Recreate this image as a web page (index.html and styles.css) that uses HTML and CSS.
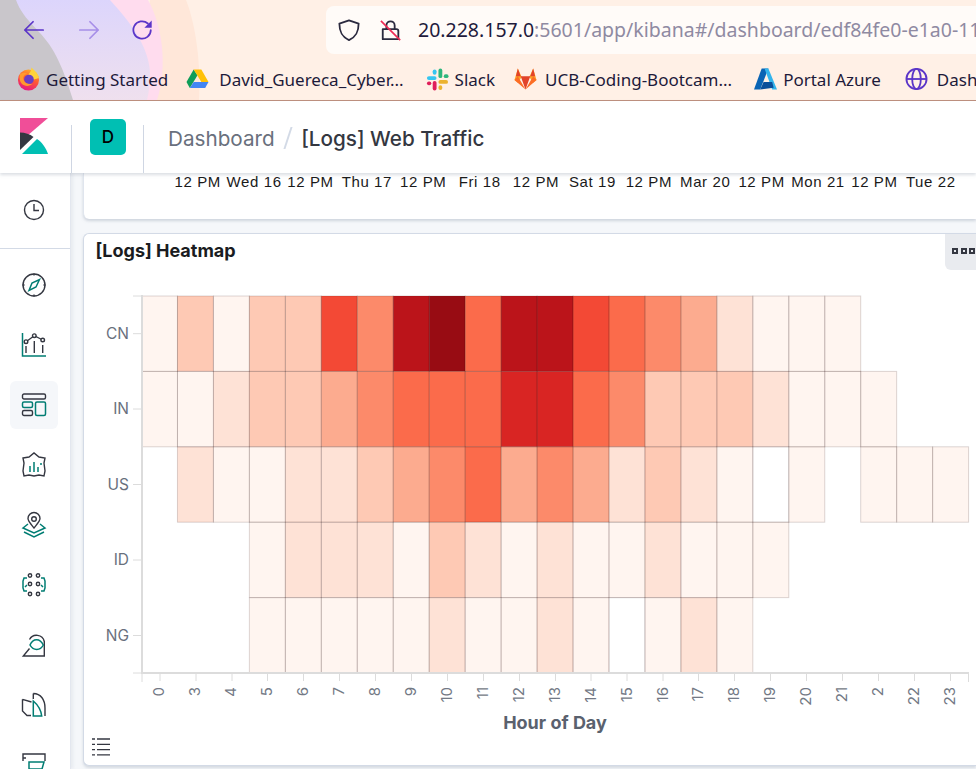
FILE: index.html
```html
<!DOCTYPE html>
<html lang="en">
<head>
<meta charset="utf-8">
<title>[Logs] Web Traffic</title>
<link rel="stylesheet" href="styles.css">
</head>
<body>
<div class="page">
  <header class="browser">
    <svg class="theme" viewBox="0 0 976 100" preserveAspectRatio="none" aria-hidden="true">
      <defs>
        <linearGradient id="lav" x1="0" y1="0" x2="0" y2="1"><stop offset="0" stop-color="#dcd5fc"/><stop offset="1" stop-color="#efe0ee"/></linearGradient>
      </defs>
      <rect class="th-base" width="976" height="100"/>
      <path class="th-peach" d="M150 0H186C196 25 201 65 199 100H140Z"/>
      <path class="th-pink" d="M100 0H148C162 25 168 65 157 100H100Z"/>
      <path fill="url(#lav)" d="M0 0H110C130 22 148 45 150 72C150 82 149 92 147 100H0Z"/>
      <path class="th-gray" d="M0 0H16C24 22 42 30 54 52C62 66 68 84 73 100H0Z"/>
    </svg>
    <div class="toolbar">
      <svg class="nav-ico back" viewBox="0 0 24 24"><path d="M22 12H2M11 3l-9 9 9 9"/></svg>
      <svg class="nav-ico fwd" viewBox="0 0 24 24"><path d="M2 12h20M13 3l9 9-9 9"/></svg>
      <svg class="nav-ico reload" viewBox="0 0 24 24"><path d="M20.5 12a9.5 9.5 0 1 1-3.2-7.1"/><path class="solid" d="M21.5 1.5v8h-8z"/></svg>
      <div class="urlbar">
        <svg class="url-ico shield" viewBox="0 0 24 24"><path d="M12 1.5 22.5 5c0 9-2.500 14.500-10.500 18C4 19.500 1.500 14 1.500 5z"/></svg>
        <svg class="url-ico lock" viewBox="0 0 24 24"><path d="M3 11h15a2 2 0 0 1 2 2v9H3z"/><path d="M7 11V7a4.500 4.500 0 0 1 9 0v4"/><path class="slash" d="M1 2l21 21"/></svg>
        <span class="url"><span class="url-host">20.228.157.0</span>:5601/app/kibana#/dashboard/edf84fe0-e1a0-11</span>
      </div>
    </div>
    <nav class="bookmarks">
      <a class="bm bm-ff">
        <svg class="bm-ico" viewBox="0 0 24 24">
          <defs>
            <linearGradient id="ffg" x1="0.7" y1="0" x2="0.3" y2="1"><stop offset="0" stop-color="#ffb427"/><stop offset=".45" stop-color="#ff5a32"/><stop offset="1" stop-color="#e31587"/></linearGradient>
          </defs>
          <circle cx="12" cy="13" r="11" fill="url(#ffg)"/>
          <path fill="#ffd23a" d="M15 0c3 3 7 6 8 11l-7 2-4-6c2-2 3-4 3-7z"/>
          <circle cx="12.500" cy="12.500" r="5" fill="#6a3fc4"/>
          <path fill="#ff9a2e" d="M3 7c3-2 6-2 8 0-3 0-5 2-4 6 1 3 5 5 9 4-3 3-8 3-11 0-2-2-3-6-2-10z"/>
        </svg>
        <span>Getting Started</span>
      </a>
      <a class="bm bm-drive">
        <svg class="bm-ico" viewBox="0 0 24 24">
          <path fill="#0f9d58" d="M8 2 .5 15l3.500 6.500L12 8z"/>
          <path fill="#ffc107" d="M8 2h8l7.500 13H16z"/>
          <path fill="#4285f4" d="M23.500 15 20 21.500H4L8 15z"/>
        </svg>
        <span>David_Guereca_Cyber...</span>
      </a>
      <a class="bm bm-slack">
        <svg class="bm-ico" viewBox="0 0 24 24">
          <rect class="sl-b" x="1" y="9" width="10" height="4" rx="2"/><rect class="sl-b" x="7" y="2" width="4" height="5.500" rx="2"/>
          <rect class="sl-g" x="13" y="1" width="4" height="10" rx="2"/><rect class="sl-g" x="18.500" y="7" width="5" height="4" rx="2"/>
          <rect class="sl-y" x="13" y="13" width="10" height="4" rx="2"/><rect class="sl-y" x="13" y="18.500" width="4" height="5" rx="2"/>
          <rect class="sl-r" x="7" y="14" width="4" height="10" rx="2"/><rect class="sl-r" x="1" y="14.500" width="4.500" height="4" rx="2"/>
        </svg>
        <span>Slack</span>
      </a>
      <a class="bm bm-git">
        <svg class="bm-ico" viewBox="0 0 24 24">
          <path fill="#fca326" d="M4 1 .5 13 4 16l4-6z"/>
          <path fill="#fca326" d="M20 1l3.500 12L20 16l-4-6z"/>
          <path fill="#fc6d26" d="M.5 13 12 23 4 9zM23.500 13 12 23l8-14z"/>
          <path fill="#e24329" d="M7 9h10l-5 14zM4 1l3 8H2zM20 1l-3 8h5z"/>
        </svg>
        <span>UCB-Coding-Bootcam...</span>
      </a>
      <a class="bm bm-az">
        <svg class="bm-ico" viewBox="0 0 24 24">
          <path fill="#0a64b4" d="M8 1h7L6.500 23H0z"/>
          <path fill="#33b4ec" d="M15 1h-4l8 22h5z"/>
          <path fill="#0b4f9a" d="M10 15h9l1.500 6-14 2z"/>
        </svg>
        <span>Portal Azure</span>
      </a>
      <a class="bm bm-globe">
        <svg class="bm-ico globe" viewBox="0 0 24 24"><circle cx="12" cy="12" r="10.500"/><ellipse cx="12" cy="12" rx="4.500" ry="10.500"/><path d="M1.500 12h21"/></svg>
        <span>Dash</span>
      </a>
    </nav>
  </header>

  <div class="kbn-header">
    <div class="logo-cell">
      <svg class="kbn-logo" viewBox="0 0 28 36">
        <path class="lg-pink" d="M0 0h28L0 24z"/>
        <path class="lg-dark" d="M0 14.500c5 0 10 1.500 13.500 4.500L0 32z"/>
        <path class="lg-teal" d="M2 36 17 21c5 3 9 9 11 15z"/>
      </svg>
    </div>
    <div class="space-cell"><span class="space">D</span></div>
    <div class="crumbs"><span class="crumb">Dashboard</span><span class="crumb-sep"></span><span class="crumb-cur">[Logs] Web Traffic</span></div>
  </div>

  <div class="main">
    <aside class="sidebar">
      <div class="side-top">
        <span class="side-item">
          <svg class="app-ico" viewBox="0 0 24 24"><circle class="d" cx="12" cy="12" r="9.500"/><path class="d" d="M12 6v6.500h5"/></svg>
        </span>
      </div>
      <div class="side-apps">
        <span class="side-item">
          <svg class="app-ico" viewBox="0 0 24 24"><circle class="d" cx="12" cy="12" r="11"/><path class="d" d="M12 .5v2M12 21.500v2M.5 12h2M21.500 12h2"/><path class="t tf" d="M17.500 6.500 14 14l-7 3.500L10 10z"/></svg>
        </span>
        <span class="side-item">
          <svg class="app-ico" viewBox="0 0 24 24"><path class="t" d="M.5 0v23h23.500"/><path class="d" d="M4 8.700 12.300 2.700 20.700 7M4 13v7M12.300 8v12M20.700 12v8"/><circle class="d w" cx="4" cy="8.700" r="1.800"/><circle class="d w" cx="12.300" cy="2.700" r="1.800"/><circle class="d w" cx="20.700" cy="7" r="1.800"/></svg>
        </span>
        <span class="side-item active">
          <svg class="app-ico" viewBox="0 0 24 24"><rect class="d" x=".5" y="1" width="23" height="5" rx="1.500"/><rect class="t" x=".5" y="9" width="10" height="5.500" rx="1.500"/><rect class="d" x=".5" y="17.500" width="10" height="5" rx="1.500"/><rect class="t" x="13.500" y="9" width="10" height="13.500" rx="1.500"/></svg>
        </span>
        <span class="side-item">
          <svg class="app-ico" viewBox="0 0 24 24"><path class="d" d="M1 5 7 4l5-4 5 4 6 1-1 5 1 8-1 5-5-1-5 1-5-1-5 1-1-5 1-8z"/><path class="t" d="M8 13v6M12 9v10M16 14v5M19 10v2"/></svg>
        </span>
        <span class="side-item">
          <svg class="app-ico" viewBox="0 0 24 24"><path class="d" d="M12 15C8 10 6 8 6 5.500a6 6 0 0 1 12 0C18 8 16 10 12 15z"/><circle class="d" cx="12" cy="6" r="2.300"/><path class="t" d="M6 11 1 15l11 5 11-5-5-4M2 19l10 5 10-5"/></svg>
        </span>
        <span class="side-item">
          <svg class="app-ico" viewBox="0 0 24 24"><circle class="d" cx="8" cy="2.500" r="1.700"/><circle class="d" cx="16" cy="2.500" r="1.700"/><circle class="d" cx="8" cy="11" r="1.700"/><circle class="d" cx="16" cy="11" r="1.700"/><circle class="d" cx="8" cy="21" r="1.700"/><circle class="d" cx="16" cy="21" r="1.700"/><path class="t" d="M5 5H2L1 8v7l1 3h3M5 12l-2 2M19 5h3l1 3v7l-1 3h-3M19 12l2 2"/></svg>
        </span>
        <span class="side-item">
          <svg class="app-ico" viewBox="0 0 24 24"><path class="d" d="M7.500 6.500A8 8 0 0 1 22.300 8.500V23H1.300L7.500 15.500"/><path class="t" d="M8 12c3-7 10-7 13.300 0c-3 6-10 6-13.300 0z"/></svg>
        </span>
        <span class="side-item">
          <svg class="app-ico" viewBox="0 0 24 24"><path class="d" d="M11.300 .5C19 .5 23 7 23 15V23M11.300 .5V6M.5 6.300 9.500 9M.5 6.300V18L5 22.500H9"/><path class="t" d="M11.300 8C16 12 19 17 19.700 23H11.300Z"/></svg>
        </span>
        <span class="side-item">
          <svg class="app-ico" viewBox="0 0 24 24"><path class="d" d="M1 8V1h22v7M1 5h3"/><path class="t" d="M7 9h15l-2 7H7zM7 16v6"/></svg>
        </span>
      </div>
    </aside>

    <main class="content">
      <section class="panel panel-top">
        <div class="time-axis">
          <span>12 PM</span><span>Wed 16</span><span>12 PM</span><span>Thu 17</span><span>12 PM</span><span>Fri 18</span><span>12 PM</span><span>Sat 19</span><span>12 PM</span><span>Mar 20</span><span>12 PM</span><span>Mon 21</span><span>12 PM</span><span>Tue 22</span>
        </div>
      </section>

      <section class="panel panel-heat">
        <div class="panel-head">
          <h2 class="panel-title">[Logs] Heatmap</h2>
          <button class="panel-menu" aria-label="Options"><i></i><i></i><i></i></button>
        </div>
        <svg class="chart" viewBox="84 269 892 496" role="img" aria-label="Heatmap">
          <g id="cells" class="cells">
            <rect class="cell l1" x="141.5" y="296"/><rect class="cell l3" x="177.46" y="296"/><rect class="cell l1" x="213.42" y="296"/><rect class="cell l3" x="249.38" y="296"/><rect class="cell l3" x="285.34" y="296"/><rect class="cell l7" x="321.3" y="296"/><rect class="cell l5" x="357.26" y="296"/><rect class="cell l9" x="393.22" y="296"/><rect class="cell l10" x="429.18" y="296"/><rect class="cell l6" x="465.14" y="296"/><rect class="cell l9" x="501.1" y="296"/><rect class="cell l9" x="537.06" y="296"/><rect class="cell l7" x="573.02" y="296"/><rect class="cell l6" x="608.98" y="296"/><rect class="cell l5" x="644.94" y="296"/><rect class="cell l4" x="680.9" y="296"/><rect class="cell l2" x="716.86" y="296"/><rect class="cell l1" x="752.82" y="296"/><rect class="cell l1" x="788.78" y="296"/><rect class="cell l1" x="824.74" y="296"/>
            <rect class="cell l1" x="141.5" y="371.4"/><rect class="cell l1" x="177.46" y="371.4"/><rect class="cell l2" x="213.42" y="371.4"/><rect class="cell l3" x="249.38" y="371.4"/><rect class="cell l3" x="285.34" y="371.4"/><rect class="cell l4" x="321.3" y="371.4"/><rect class="cell l5" x="357.26" y="371.4"/><rect class="cell l6" x="393.22" y="371.4"/><rect class="cell l6" x="429.18" y="371.4"/><rect class="cell l6" x="465.14" y="371.4"/><rect class="cell l8" x="501.1" y="371.4"/><rect class="cell l8" x="537.06" y="371.4"/><rect class="cell l6" x="573.02" y="371.4"/><rect class="cell l5" x="608.98" y="371.4"/><rect class="cell l3" x="644.94" y="371.4"/><rect class="cell l3" x="680.9" y="371.4"/><rect class="cell l3" x="716.86" y="371.4"/><rect class="cell l2" x="752.82" y="371.4"/><rect class="cell l1" x="788.78" y="371.4"/><rect class="cell l1" x="824.74" y="371.4"/><rect class="cell l1" x="860.7" y="371.4"/>
            <rect class="cell l2" x="177.46" y="446.8"/><rect class="cell l1" x="213.42" y="446.8"/><rect class="cell l1" x="249.38" y="446.8"/><rect class="cell l2" x="285.34" y="446.8"/><rect class="cell l2" x="321.3" y="446.8"/><rect class="cell l3" x="357.26" y="446.8"/><rect class="cell l4" x="393.22" y="446.8"/><rect class="cell l5" x="429.18" y="446.8"/><rect class="cell l6" x="465.14" y="446.8"/><rect class="cell l4" x="501.1" y="446.8"/><rect class="cell l5" x="537.06" y="446.8"/><rect class="cell l4" x="573.02" y="446.8"/><rect class="cell l2" x="608.98" y="446.8"/><rect class="cell l3" x="644.94" y="446.8"/><rect class="cell l2" x="680.9" y="446.8"/><rect class="cell l1" x="716.86" y="446.8"/><rect class="cell l0" x="752.82" y="446.8"/><rect class="cell l1" x="788.78" y="446.8"/><rect class="cell l1" x="860.7" y="446.8"/><rect class="cell l1" x="896.66" y="446.8"/><rect class="cell l1" x="932.62" y="446.8"/>
            <rect class="cell l1" x="249.38" y="522.2"/><rect class="cell l2" x="285.34" y="522.2"/><rect class="cell l2" x="321.3" y="522.2"/><rect class="cell l2" x="357.26" y="522.2"/><rect class="cell l1" x="393.22" y="522.2"/><rect class="cell l3" x="429.18" y="522.2"/><rect class="cell l2" x="465.14" y="522.2"/><rect class="cell l1" x="501.1" y="522.2"/><rect class="cell l2" x="537.06" y="522.2"/><rect class="cell l1" x="573.02" y="522.2"/><rect class="cell l1" x="608.98" y="522.2"/><rect class="cell l2" x="644.94" y="522.2"/><rect class="cell l1" x="680.9" y="522.2"/><rect class="cell l1" x="716.86" y="522.2"/><rect class="cell l1" x="752.82" y="522.2"/>
            <rect class="cell l1" x="249.38" y="597.6"/><rect class="cell l1" x="285.34" y="597.6"/><rect class="cell l1" x="321.3" y="597.6"/><rect class="cell l1" x="357.26" y="597.6"/><rect class="cell l1" x="393.22" y="597.6"/><rect class="cell l2" x="429.18" y="597.6"/><rect class="cell l1" x="465.14" y="597.6"/><rect class="cell l1" x="501.1" y="597.6"/><rect class="cell l2" x="537.06" y="597.6"/><rect class="cell l1" x="573.02" y="597.6"/><rect class="cell l0" x="608.98" y="597.6"/><rect class="cell l1" x="644.94" y="597.6"/><rect class="cell l2" x="680.9" y="597.6"/><rect class="cell l1" x="716.86" y="597.6"/>
          </g>
          <use href="#cells" class="strokes"/>
          <path class="axis" d="M142 295v379M142 673H969"/>
          <path class="tick" d="M133 296h9M133 333.700h9M133 409h9M133 484.500h9M133 560h9M133 635.500h9M133 673h9M142 673v9M968.500 673v9"/>
          <path class="tick" d="M160 674v7M196 674v7M232 674v7M267.500 674v7M303.500 674v7M339.500 674v7M375.500 674v7M411.500 674v7M447.500 674v7M483.500 674v7M519.500 674v7M555.500 674v7M591 674v7M627 674v7M663 674v7M698.500 674v7M734.500 674v7M770.500 674v7M806.500 674v7M842.500 674v7M878.500 674v7M914.500 674v7M950.500 674v7"/>
          <g class="ylab">
            <text x="129" y="338.700">CN</text><text x="129" y="414">IN</text><text x="129" y="489.500">US</text><text x="129" y="565">ID</text><text x="129" y="640.500">NG</text>
          </g>
          <g class="xlab">
            <text transform="translate(164,687) rotate(-90)">0</text><text transform="translate(200,687) rotate(-90)">3</text><text transform="translate(236,687) rotate(-90)">4</text><text transform="translate(272,687) rotate(-90)">5</text><text transform="translate(308,687) rotate(-90)">6</text><text transform="translate(344,687) rotate(-90)">7</text><text transform="translate(380,687) rotate(-90)">8</text><text transform="translate(416,687) rotate(-90)">9</text><text transform="translate(452,687) rotate(-90)">10</text><text transform="translate(488,687) rotate(-90)">11</text><text transform="translate(524,687) rotate(-90)">12</text><text transform="translate(560,687) rotate(-90)">13</text><text transform="translate(596,687) rotate(-90)">14</text><text transform="translate(632,687) rotate(-90)">15</text><text transform="translate(668,687) rotate(-90)">16</text><text transform="translate(703,687) rotate(-90)">17</text><text transform="translate(739,687) rotate(-90)">18</text><text transform="translate(775,687) rotate(-90)">19</text><text transform="translate(811,687) rotate(-90)">20</text><text transform="translate(847,687) rotate(-90)">21</text><text transform="translate(883,687) rotate(-90)">2</text><text transform="translate(919,687) rotate(-90)">22</text><text transform="translate(955,687) rotate(-90)">23</text>
          </g>
          <text class="xtitle" x="555" y="729">Hour of Day</text>
        </svg>
        <button class="legend-toggle" aria-label="Legend">
          <svg viewBox="0 0 18 18"><path d="M0 1h3M5 1h13M0 6.300h3M5 6.300h13M0 11.600h3M5 11.600h13M0 16.900h3M5 16.900h13"/></svg>
        </button>
      </section>
    </main>
  </div>
</div>
</body>
</html>
```
FILE: styles.css
```css
* { box-sizing: border-box; }
html, body { margin: 0; padding: 0; }
body { background: #f5f7fa; font-family: "Inter", "Liberation Sans", sans-serif; }
.page { width: 976px; height: 769px; overflow: hidden; display: flex; flex-direction: column; }

/* Browser chrome */
.browser { position: relative; height: 101px; flex: none; border-bottom: 1px solid #bd8f7d; overflow: hidden; }
.theme { position: absolute; left: 0; top: 0; width: 976px; height: 100px; }
.th-base { fill: #fff0e6; }
.th-peach { fill: #ffe7d9; }
.th-pink { fill: #ffdcee; }
.th-gray { fill: #c9c6cb; }
.toolbar { position: relative; display: flex; align-items: center; height: 56px; padding: 4px 0 0 23px; }
.nav-ico { width: 22px; height: 22px; fill: none; stroke-width: 1.900; stroke-linecap: round; stroke-linejoin: round; flex: none; }
.back { stroke: #5b35c8; }
.fwd { stroke: #a78fe8; margin-left: 33px; }
.reload { stroke: #5b35c8; margin-left: 32px; }
.reload .solid { fill: #5b35c8; stroke: none; }
.urlbar { display: flex; align-items: center; height: 48px; width: 651px; margin-left: 172px; background: #fffbf8; border-radius: 8px 0 0 8px; padding-left: 12px; overflow: hidden; flex: none; }
.url-ico { width: 22px; height: 24px; fill: none; stroke: #2b2a3f; stroke-width: 2; flex: none; stroke-linejoin: round; }
.lock { margin-left: 20px; }
.lock .slash { stroke: #ef2a55; stroke-width: 1.800; }
.url { margin-left: 16px; font: 19.500px/1 "Noto Sans", "Open Sans", sans-serif; color: #8f8aa2; white-space: nowrap; }
.url-host { color: #1f1b3d; }
.bookmarks { position: relative; display: flex; align-items: center; height: 46px; padding-left: 17px; white-space: nowrap; }
.bm { display: flex; align-items: center; gap: 6px; font: 17px/1 "Noto Sans", "Open Sans", sans-serif; color: #1d1a3a; flex: none; }
.bm-ico { width: 23px; height: 24px; flex: none; }
.bm-drive { margin-left: 18px; gap: 10px; }
.bm-slack { margin-left: 22px; gap: 6px; }
.bm-git { margin-left: 19px; gap: 8px; }
.bm-az { margin-left: 22px; gap: 6px; }
.bm-globe { margin-left: 24px; gap: 9px; }
.globe { fill: none; stroke: #5b35c8; stroke-width: 1.900; }
.sl-b { fill: #36c5f0; } .sl-g { fill: #2eb67d; } .sl-y { fill: #ecb22e; } .sl-r { fill: #e01e5a; }

/* Kibana header */
.kbn-header { position: relative; z-index: 3; height: 72px; flex: none; display: flex; background: #fff; box-shadow: 0 2px 3px rgba(152,162,179,.35); }
.logo-cell { width: 72px; height: 100%; padding: 17px 0 0 20px; position: relative; }
.logo-cell::after, .space-cell::after { content: ""; position: absolute; right: 0; top: 24px; bottom: 0; width: 1px; background: #cfd6e3; }
.kbn-logo { display: block; width: 28px; height: 36px; }
.lg-pink { fill: #f04e98; } .lg-dark { fill: #343741; } .lg-teal { fill: #00bfb3; }
.space-cell { position: relative; width: 72px; height: 100%; padding: 18px 0 0 18px; }
.space { display: flex; align-items: center; justify-content: center; width: 36px; height: 36px; border-radius: 5px; background: #00bfb3; color: #000; font-size: 17px; font-weight: 500; }
.crumbs { display: flex; align-items: center; height: 74px; padding-left: 24px; font-size: 20.700px; }
.crumb { color: #69707d; }
.crumb-sep { width: 2px; height: 22px; background: #d3dae6; transform: skewX(-18deg); margin: 0 12.500px 0 12px; }
.crumb-cur { color: #343741; font-weight: 500; }

/* Layout below header */
.main { flex: 1; display: flex; min-height: 0; }
.sidebar { width: 71px; flex: none; background: #fff; border-right: 1px solid #e3e7ef; box-shadow: 2px 0 3px rgba(152,162,179,.15); overflow: hidden; }
.side-top { height: 76px; padding-top: 13px; border-bottom: 1px solid #d3dae6; }
.side-apps { display: flex; flex-direction: column; gap: 12px; padding-top: 12px; }
.side-item { display: flex; align-items: center; justify-content: center; width: 48px; height: 48px; margin-left: 10px; border-radius: 6px; flex: none; }
.side-item.active { background: #f5f7fa; }
.app-ico { width: 24px; height: 24px; overflow: visible; }
.app-ico .d { fill: none; stroke: #343741; stroke-width: 1.400; }
.app-ico .t { fill: none; stroke: #017d73; stroke-width: 1.500; }
.app-ico .tf { fill: #fff; }
.app-ico .w { fill: #fff; }

.content { flex: 1; min-width: 0; padding-left: 12px; display: flex; flex-direction: column; gap: 14px; }
.panel { background: #fff; border-radius: 6px; }
.panel-top { height: 46px; flex: none; border-radius: 0 0 0 6px; border-left: 1px solid #e0e5ee; box-shadow: 0 2px 3px rgba(152,162,179,.4); }
.time-axis { display: flex; padding-left: 85.500px; height: 18px; font: 15px/18px "Liberation Sans", Arial, sans-serif; color: #1a1a1a; letter-spacing: .6px; }
.time-axis span { flex: none; width: 56.400px; text-align: center; white-space: nowrap; }
.panel-heat { position: relative; height: 533px; flex: none; border: 1px solid #d3dae6; border-right: 0; border-radius: 6px 0 0 6px; box-shadow: 0 2px 3px rgba(152,162,179,.35); }
.panel-head { display: flex; justify-content: space-between; height: 35px; }
.panel-title { margin: 0; padding: 6px 0 0 11.500px; font-size: 18px; line-height: 22px; font-weight: 700; color: #1a1c21; }
.panel-menu { width: 31px; height: 36px; padding: 0 0 2px 7px; display: flex; align-items: center; gap: 2.500px; border: 0; background: #e9ebef; border-radius: 0 0 0 6px; }
.panel-menu i { display: block; width: 6px; height: 6px; border: 2px solid #343741; flex: none; }

/* Chart */
.chart { display: block; width: 892px; height: 496px; }
.cell { width: 35.960px; height: 75.400px; }
.strokes { stroke: rgba(45,20,20,.17); stroke-width: 1; fill-opacity: 0; }
.l0 { fill: #fff; } .l1 { fill: #fff5f0; } .l2 { fill: #fee2d6; } .l3 { fill: #fec9b4; } .l4 { fill: #fcab8f; } .l5 { fill: #fc8a6a; }
.l6 { fill: #fb6b4b; } .l7 { fill: #f34935; } .l8 { fill: #d92523; } .l9 { fill: #bb141a; } .l10 { fill: #980c13; }
.axis { fill: none; stroke: #dcdcdc; stroke-width: 2; }
.tick { fill: none; stroke: #dcdcdc; stroke-width: 1; }
.ylab text { font: 15.500px "Inter", sans-serif; fill: #69707d; text-anchor: end; }
.xlab text { font: 15px "Inter", sans-serif; fill: #737985; text-anchor: end; }
.xtitle { font: 700 18px "Inter", sans-serif; fill: #5a616e; text-anchor: middle; }
.legend-toggle { position: absolute; left: 8px; bottom: 9px; width: 18px; height: 18px; padding: 0; border: 0; background: none; }
.legend-toggle svg { display: block; width: 18px; height: 18px; fill: none; stroke: #343741; stroke-width: 1.300; }
```
